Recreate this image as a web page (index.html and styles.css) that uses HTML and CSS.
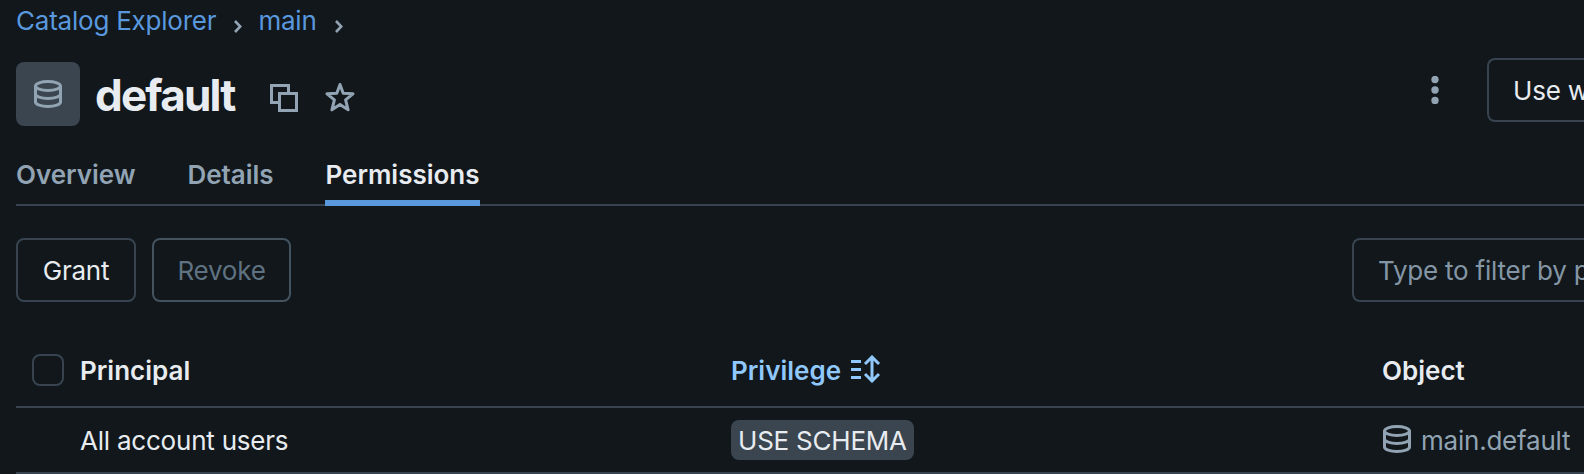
FILE: index.html
```html
<!DOCTYPE html>
<html lang="en">
<head>
    <meta charset="UTF-8">
    <meta name="viewport" content="width=device-width, initial-scale=1.0">
    <title>Catalog Explorer</title>
    <link rel="stylesheet" href="styles.css">
</head>
<body>
    <svg width="0" height="0" class="sprite">
        <symbol id="icon-schema" viewBox="0 0 28 28">
            <g fill="none" stroke="currentColor" stroke-width="3">
                <ellipse cx="14" cy="6" rx="12.5" ry="4.5"/>
                <path d="M1.5 6v16c0 2.5 5.6 4.5 12.5 4.5s12.5-2 12.5-4.5V6"/>
                <path d="M1.5 14c0 2.5 5.6 4.5 12.5 4.5s12.5-2 12.5-4.5"/>
            </g>
        </symbol>
        <symbol id="icon-chevron" viewBox="0 0 8 13">
            <path d="M1 1l5.3 5.5L1 12" fill="none" stroke="currentColor" stroke-width="2.6"/>
        </symbol>
    </svg>

    <nav class="breadcrumb">
        <a href="#">Catalog Explorer</a>
        <svg class="chevron"><use href="#icon-chevron"/></svg>
        <a href="#">main</a>
        <svg class="chevron"><use href="#icon-chevron"/></svg>
    </nav>

    <header class="page-header">
        <div class="schema-badge"><svg class="icon"><use href="#icon-schema"/></svg></div>
        <h1>default</h1>
        <svg class="icon copy" viewBox="0 0 28 28" fill="none" stroke="currentColor" stroke-width="3">
            <path d="M8 18.5H1.5v-17h17V8"/>
            <rect x="9.5" y="9.5" width="17" height="17"/>
        </svg>
        <svg class="star" viewBox="0 0 30 30" fill="none" stroke="currentColor" stroke-width="3" stroke-linejoin="round">
            <path d="M15 2.5l3.2 8.7 9.8.6-7.4 6 2.5 10L15 22.4 6.9 27.8l2.5-10-7.4-6 9.800-.6z"/>
        </svg>
        <div class="header-actions">
            <svg class="kebab" viewBox="0 0 8 28" fill="currentColor">
                <circle cx="4" cy="3.5" r="3.7"/>
                <circle cx="4" cy="14" r="3.7"/>
                <circle cx="4" cy="24.5" r="3.7"/>
            </svg>
            <button class="btn btn-use">Use w</button>
        </div>
    </header>

    <div class="tabs">
        <a href="#" class="tab">Overview</a>
        <a href="#" class="tab">Details</a>
        <a href="#" class="tab active">Permissions</a>
    </div>

    <div class="toolbar">
        <button class="btn btn-grant">Grant</button>
        <button class="btn btn-revoke" disabled>Revoke</button>
        <div class="filter">Type to filter by p</div>
    </div>

    <div class="table">
        <div class="row row-head">
            <div class="check"><span class="checkbox"></span></div>
            <div class="cell">Principal</div>
            <div class="cell sorted">
                Privilege
                <svg class="sort" viewBox="0 0 30 28" fill="none" stroke="currentColor" stroke-width="3">
                    <path d="M0 6.5h10M0 14.5h10M0 22.5h10"/>
                    <path d="M21 2.5v23M14 9l7-7 7 7M14 19l7 7 7-7"/>
                </svg>
            </div>
            <div class="cell">Object</div>
        </div>
        <div class="row">
            <div class="check"></div>
            <div class="cell">All account users</div>
            <div class="cell"><span class="tag">USE SCHEMA</span></div>
            <div class="cell object"><svg class="icon"><use href="#icon-schema"/></svg>main.default</div>
        </div>
    </div>
</body>
</html>
```
FILE: styles.css
```css
* {
    margin: 0;
    padding: 0;
    box-sizing: border-box;
}

body {
    height: 474px;
    padding-left: 16px;
    background-color: #11171b;
    color: #e8ecf0;
    font-family: Inter, "Liberation Sans", sans-serif;
    font-size: 26px;
    line-height: 40px;
    letter-spacing: -0.22px;
    white-space: nowrap;
    overflow: hidden;
}

a {
    text-decoration: none;
}

svg {
    display: block;
    flex-shrink: 0;
}

.sprite {
    position: absolute;
}

.icon {
    width: 28px;
    height: 28px;
    color: #92a4b3;
}

/* Breadcrumb */
.breadcrumb {
    display: flex;
    align-items: center;
    height: 42px;
}

.breadcrumb a {
    color: #5a98de;
}

.chevron {
    width: 8px;
    height: 13px;
    margin: 11px 16px 0 18px;
    color: #92a4b3;
}

/* Header */
.page-header {
    display: flex;
    align-items: center;
    height: 104px;
}

.schema-badge {
    display: flex;
    align-items: center;
    justify-content: center;
    width: 64px;
    height: 64px;
    border-radius: 8px;
    background-color: #3a454f;
}

h1 {
    width: 143px;
    margin: 2px 32px 0 15px;
    font-size: 44px;
    font-weight: 700;
    letter-spacing: -1.8px;
}

.copy {
    margin-top: 8px;
}

.star {
    width: 30px;
    height: 30px;
    margin: 6px 0 0 27px;
    color: #92a4b3;
}

.header-actions {
    display: flex;
    align-items: center;
    gap: 48px;
    width: 153px;
    height: 64px;
    margin: -8px 0 0 auto;
}

.kebab {
    width: 8px;
    height: 28px;
    color: #92a4b3;
}

/* Buttons */
.btn {
    flex-shrink: 0;
    height: 64px;
    padding: 2px 23px 0;
    border: 2px solid #37444f;
    border-radius: 8px;
    background: none;
    color: #e8ecf0;
    font: inherit;
    letter-spacing: inherit;
}

.btn-use {
    width: 97px;
    padding: 2px 0 0 24px;
    border-right: none;
    border-radius: 8px 0 0 8px;
    text-align: left;
}

.btn-grant {
    width: 120px;
}

.btn-revoke {
    width: 139px;
    border-color: #445360;
    color: #5f7281;
}

/* Tabs */
.tabs {
    display: flex;
    gap: 52px;
    height: 60px;
    border-bottom: 2px solid #37444f;
}

.tab {
    height: 60px;
    padding-top: 9px;
    color: #92a4b3;
    font-weight: 600;
    letter-spacing: -0.04px;
}

.tab.active {
    border-bottom: 6px solid #5a98de;
    color: #e8ecf0;
    letter-spacing: 0;
}

/* Toolbar */
.toolbar {
    display: flex;
    gap: 16px;
    margin-top: 32px;
}

.filter {
    width: 232px;
    height: 64px;
    margin-left: auto;
    padding: 11px 0 0 24px;
    border: 2px solid #37444f;
    border-right: none;
    border-radius: 8px 0 0 8px;
    color: #8496a5;
    overflow: hidden;
}

/* Table */
.table {
    margin-top: 32px;
}

.row {
    display: grid;
    grid-template-columns: 64px 651px 651px 1fr;
    align-items: center;
    height: 66px;
    padding-top: 2px;
    border-bottom: 2px solid #37444f;
}

.row-head {
    height: 74px;
    font-weight: 600;
    letter-spacing: 0;
}

.check {
    padding-left: 16px;
}

.checkbox {
    display: block;
    width: 32px;
    height: 32px;
    margin-top: -2px;
    border: 2px solid #37444f;
    border-radius: 8px;
}

.sorted {
    display: flex;
    align-items: center;
    gap: 10px;
    color: #90c8fb;
}

.sort {
    width: 30px;
    height: 28px;
    margin-top: -4px;
}

.tag {
    display: block;
    width: 183px;
    height: 40px;
    margin-top: -2px;
    padding: 1px 0 0 7px;
    border-radius: 8px;
    background-color: #3a454f;
}

.object {
    display: flex;
    align-items: center;
    gap: 10px;
    padding-left: 1px;
    color: #92a4b3;
}

.object .icon {
    margin-top: -4px;
}
```
